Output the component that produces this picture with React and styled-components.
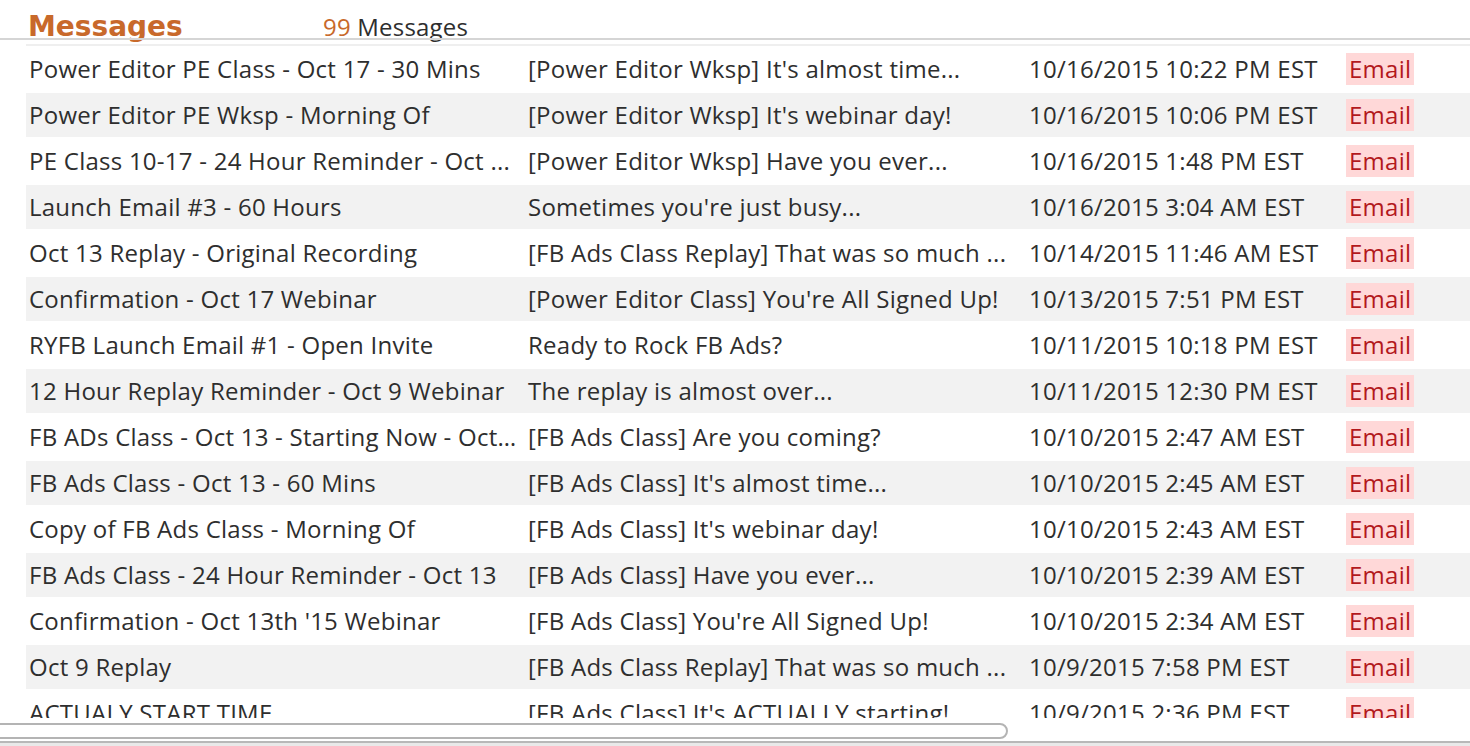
import styled, {createGlobalStyle} from "styled-components";

const rows = [
  ["Power Editor PE Class - Oct 17 - 30 Mins", "[Power Editor Wksp] It's almost time...", "10/16/2015 10:22 PM EST"],
  ["Power Editor PE Wksp - Morning Of", "[Power Editor Wksp] It's webinar day!", "10/16/2015 10:06 PM EST"],
  ["PE Class 10-17 - 24 Hour Reminder - Oct ...", "[Power Editor Wksp] Have you ever...", "10/16/2015 1:48 PM EST"],
  ["Launch Email #3 - 60 Hours", "Sometimes you're just busy...", "10/16/2015 3:04 AM EST"],
  ["Oct 13 Replay - Original Recording", "[FB Ads Class Replay] That was so much ...", "10/14/2015 11:46 AM EST"],
  ["Confirmation - Oct 17 Webinar", "[Power Editor Class] You're All Signed Up!", "10/13/2015 7:51 PM EST"],
  ["RYFB Launch Email #1 - Open Invite", "Ready to Rock FB Ads?", "10/11/2015 10:18 PM EST"],
  ["12 Hour Replay Reminder - Oct 9 Webinar", "The replay is almost over...", "10/11/2015 12:30 PM EST"],
  ["FB ADs Class - Oct 13 - Starting Now - Oct\u2026", "[FB Ads Class] Are you coming?", "10/10/2015 2:47 AM EST"],
  ["FB Ads Class - Oct 13 - 60 Mins", "[FB Ads Class] It's almost time...", "10/10/2015 2:45 AM EST"],
  ["Copy of FB Ads Class - Morning Of", "[FB Ads Class] It's webinar day!", "10/10/2015 2:43 AM EST"],
  ["FB Ads Class - 24 Hour Reminder - Oct 13", "[FB Ads Class] Have you ever...", "10/10/2015 2:39 AM EST"],
  ["Confirmation - Oct 13th '15 Webinar", "[FB Ads Class] You're All Signed Up!", "10/10/2015 2:34 AM EST"],
  ["Oct 9 Replay", "[FB Ads Class Replay] That was so much ...", "10/9/2015 7:58 PM EST"],
  ["ACTUALY START TIME", "[FB Ads Class] It's ACTUALLY starting!", "10/9/2015 2:36 PM EST"],
];

function App() {
  return (
    <Page>
      <GlobalStyle />
      <Header>
        <Title>Messages</Title>
        <Count>
          <Num>99</Num> Messages
        </Count>
      </Header>
      <HeaderRule />
      <Table>
        {rows.map((r, i) => (
          <Row key={i} $shaded={i % 2 === 1}>
            <Cell>{r[0]}</Cell>
            <Cell>{r[1]}</Cell>
            <Cell>{r[2]}</Cell>
            <Cell>
              <Badge>Email</Badge>
            </Cell>
          </Row>
        ))}
      </Table>
      <ScrollBar>
        <Thumb />
        <Track />
      </ScrollBar>
    </Page>
  );
}
export default App;

const GlobalStyle = createGlobalStyle`
  body {
    margin: 0;
    background: #fff;
    font-family: "Open Sans", "Liberation Sans", sans-serif;
    overflow: hidden;
  }
`;

const Page = styled.div`
  display: flex;
  flex-direction: column;
  height: 746px;
  overflow: hidden;
`;

const Header = styled.div`
  display: grid;
  grid-template-columns: 323px auto;
  align-items: baseline;
  height: 38px;
  box-sizing: border-box;
  padding-top: 13px;
  flex-shrink: 0;
`;

const Title = styled.div`
  padding-left: 28px;
  font-family: "DejaVu Sans", sans-serif;
  font-weight: 700;
  font-size: 28px;
  line-height: 1;
  color: #c8692b;
`;

const Count = styled.div`
  font-size: 24px;
  line-height: 1;
  letter-spacing: 0.2px;
  color: #2e2e2e;
`;

const Num = styled.span`
  color: #c8692b;
`;

const HeaderRule = styled.div`
  height: 2px;
  background: #d5d5d5;
  flex-shrink: 0;
`;

const Table = styled.div`
  margin: 4px 0 0 26px;
  border-top: 2px solid #efefef;
  padding-top: 1px;
  height: 671px;
  flex-shrink: 0;
  overflow: hidden;
  display: flex;
  flex-direction: column;
  gap: 2px;
`;

const Row = styled.div`
  display: grid;
  grid-template-columns: 499px 501px 317px 1fr;
  align-items: center;
  height: 44px;
  flex-shrink: 0;
  background: ${(p) => (p.$shaded ? "#f2f2f2" : "#fff")};
`;

const Cell = styled.div`
  padding: 0 0 2px 3px;
  font-size: 24px;
  letter-spacing: 0.25px;
  color: #2e2e2e;
  white-space: nowrap;
`;

const Badge = styled.span`
  display: inline-block;
  padding: 0 3px;
  line-height: 32px;
  background: #ffd8d8;
  color: #b3191c;
`;

const ScrollBar = styled.div`
  flex: 1;
  display: flex;
  flex-direction: column;
  padding-top: 5px;
`;

const Thumb = styled.div`
  width: 1020px;
  margin-left: -12px;
  height: 16px;
  box-sizing: border-box;
  border: 2px solid #b4b4b4;
  border-radius: 9px;
  background: #fff;
`;

const Track = styled.div`
  margin-top: 2px;
  flex: 1;
  border-top: 2px solid #b8b8b8;
  background: #e9e9e9;
`;
